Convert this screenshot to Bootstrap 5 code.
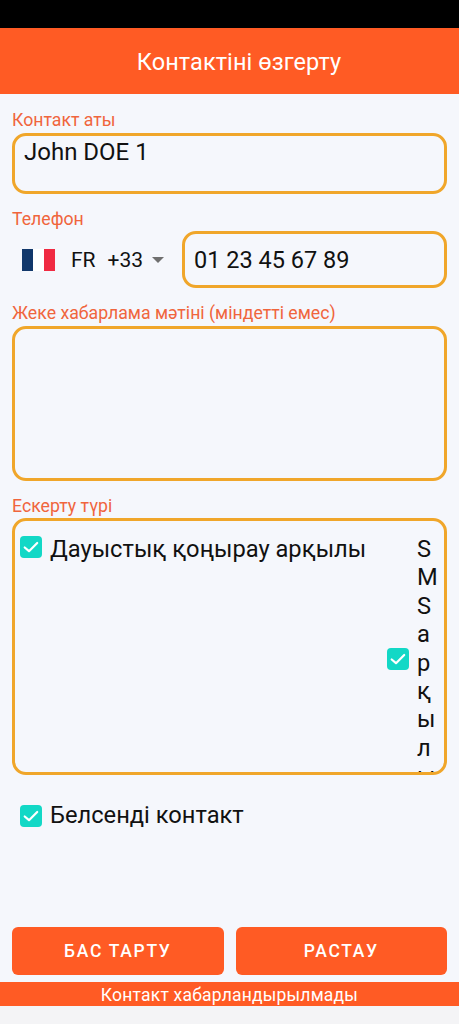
<!DOCTYPE html>
<html lang="kk">
<head>
<meta charset="utf-8">
<meta name="viewport" content="width=device-width, initial-scale=1">
<link rel="stylesheet" href="https://cdn.jsdelivr.net/npm/bootstrap@5.3.0/dist/css/bootstrap.min.css">
<style>
html, body { height: 100%; }
body { font-family: Roboto, "Liberation Sans", sans-serif; background: #f4f4f6; color: #111; width: 459px; height: 1024px; overflow: hidden; }
.status-strip { height: 28px; background: #000; }
.app-head { height: 66px; background: #ff5b24; color: #fff; font-size: 23.5px; letter-spacing: .1px; padding: 4px 0 0 19px; }
.app-body { height: 888px; background: #f5f7fc; padding: 16px 12px 7px; }
.fld-label { color: #f0653d; font-size: 17.7px; line-height: 20px; margin-bottom: 3px; }
.outlined { border: 3px solid #f0a62a; border-radius: 14px; color: #111; }
.name-box { height: 61px; padding: 1px 9px 0; font-size: 24px; line-height: 31px; margin-bottom: 15px; }
.phone-label { margin-bottom: 2px; }
.phone-row { height: 57px; margin-bottom: 15px; gap: 8px; }
.picker { width: 162px; padding-left: 10px; font-size: 21px; }
.flag { width: 33px; height: 22px; }
.code-txt { padding-top: 2px; }
.code-num { margin-left: 12px; }
.caret-tri { width: 0; height: 0; margin-left: 9px; border-left: 6px solid transparent; border-right: 6px solid transparent; border-top: 6px solid #6f6f6f; }
.phone-box { height: 57px; padding: 2px 9px 0; font-size: 23.5px; }
.msg-box { height: 155px; margin-bottom: 15px; }
.notice-label { margin-bottom: 2px; }
.notice-box { height: 257px; padding: 15px 5px 0; overflow: hidden; margin-bottom: 27px; }
.check-row { gap: 8px; }
.check-row .form-check-input { width: 22px; height: 22px; margin: 0; flex: none; background-color: #12d8c6; border: 0; border-radius: 4px; box-shadow: none; background-size: 22px 22px; background-image: url("data:image/svg+xml,%3csvg xmlns='http://www.w3.org/2000/svg' viewBox='0 0 22 22'%3e%3cpath fill='none' stroke='%23fff' stroke-width='2.2' stroke-linecap='round' stroke-linejoin='round' d='M4.7 11.5l4.3 3.7 8.2-8.2'/%3e%3c/svg%3e"); }
.check-text { font-size: 23.7px; line-height: 28.4px; margin-top: -1px; }
.sms-col { width: 22px; word-break: break-all; }
.sms-row .form-check-input { margin-bottom: 8px; }
.active-row { padding-left: 8px; }
.btn-row { gap: 12px; }
.act-btn { flex: 1 1 0; height: 48px; background: #ff5b24; border: 0; border-radius: 6px; color: #fff; font-size: 17.5px; font-weight: 500; letter-spacing: 1.7px; }
.act-btn:hover { background: #ff5b24; color: #fff; }
.state-bar { height: 24px; background: #ff5b24; color: #fff; font-size: 17.5px; line-height: 26px; letter-spacing: .2px; }
</style>
</head>
<body>
<div class="status-strip"></div>
<header class="app-head d-flex align-items-center justify-content-center">Контактіні өзгерту</header>
<main class="app-body d-flex flex-column">
  <div class="fld-label">Контакт аты</div>
  <div class="outlined name-box">John DOE 1</div>

  <div class="fld-label phone-label">Телефон</div>
  <div class="phone-row d-flex align-items-center">
    <div class="picker d-flex align-items-center flex-shrink-0">
      <svg class="flag" viewBox="0 0 33 22" aria-hidden="true"><rect width="11" height="22" fill="#12386b"/><rect x="11" width="11" height="22" fill="#fff"/><rect x="22" width="11" height="22" fill="#f02a42"/></svg>
      <span class="code-txt ms-3">FR</span>
      <span class="code-txt code-num">+33</span>
      <span class="caret-tri"></span>
    </div>
    <div class="outlined phone-box flex-grow-1 d-flex align-items-center">01 23 45 67 89</div>
  </div>

  <div class="fld-label">Жеке хабарлама мәтіні (міндетті емес)</div>
  <div class="outlined msg-box"></div>

  <div class="fld-label notice-label">Ескерту түрі</div>
  <div class="outlined notice-box d-flex justify-content-between align-items-start">
    <label class="check-row d-flex align-items-start">
      <input class="form-check-input" type="checkbox" checked>
      <span class="check-text">Дауыстық қоңырау арқылы</span>
    </label>
    <label class="check-row sms-row d-flex align-items-center">
      <input class="form-check-input" type="checkbox" checked>
      <span class="check-text sms-col">SMS арқылы</span>
    </label>
  </div>

  <label class="check-row active-row d-flex align-items-center">
    <input class="form-check-input" type="checkbox" checked>
    <span class="check-text">Белсенді контакт</span>
  </label>

  <div class="btn-row d-flex mt-auto">
    <button class="btn act-btn" type="button">БАС ТАРТУ</button>
    <button class="btn act-btn" type="button">РАСТАУ</button>
  </div>
</main>
<div class="state-bar text-center">Контакт хабарландырылмады</div>
</body>
</html>
